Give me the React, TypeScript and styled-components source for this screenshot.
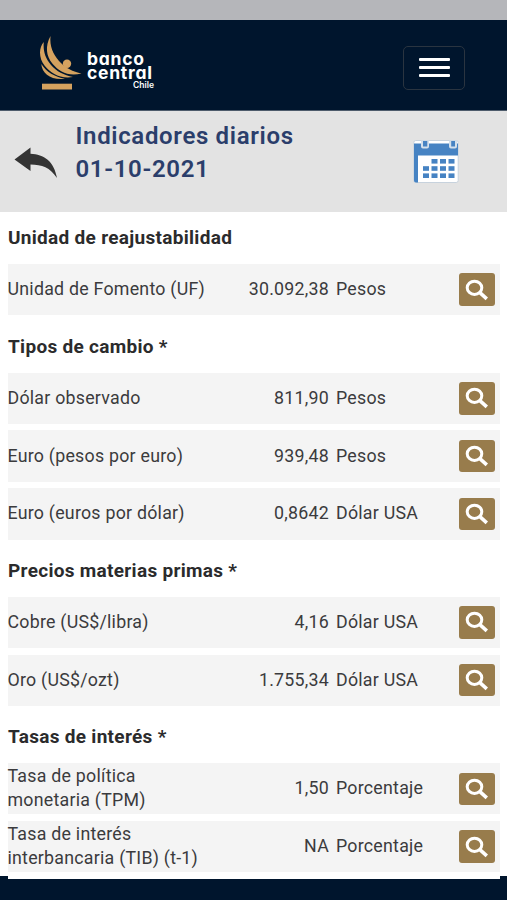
import React from 'react';
import styled, { createGlobalStyle } from 'styled-components';

const GlobalStyle = createGlobalStyle`
  * { box-sizing: border-box; }
  body { margin: 0; background: #fff; font-family: Roboto, sans-serif; color: #3b3b3d; }
  button { padding: 0; border: 0; background: none; font: inherit; }
  svg { display: block; }
`;

const Screen = styled.div`
  width: 507px;
  height: 900px;
  overflow: hidden;
  display: flex;
  flex-direction: column;
  background: #fff;
`;

const StatusBar = styled.div`
  flex: 0 0 20px;
  background: #b5b6ba;
`;

const Header = styled.header`
  flex: 0 0 91px;
  display: flex;
  align-items: flex-start;
  justify-content: space-between;
  padding: 15px 42px 0 39px;
  background: #00152d;
  border-bottom: 1px solid #4d5b6b;
`;

const Brand = styled.div`
  display: flex;
`;

const BrandName = styled.div`
  width: 71px;
  margin: 17px 0 0 5px;
  color: #fff;
  font-family: Inter, sans-serif;
  font-feature-settings: 'cv11';
`;

const BrandLine = styled.div`
  height: 13.7px;
  white-space: nowrap;
  font-size: 17.5px;
  line-height: 14px;
  font-weight: 700;
  letter-spacing: 0.75px;
`;

const Country = styled.div`
  padding: 1px 4px 0 0;
  text-align: right;
  font-size: 8.5px;
  line-height: 10px;
  font-weight: 600;
`;

const MenuButton = styled.button`
  width: 62px;
  height: 44px;
  margin-top: 10.5px;
  display: flex;
  flex-direction: column;
  align-items: center;
  justify-content: center;
  gap: 5px;
  border: 1px solid #2a3440;
  border-radius: 5px;
`;

const MenuLine = styled.span`
  width: 31px;
  height: 2.8px;
  border-radius: 1px;
  background: #fff;
`;

const TitleBar = styled.div`
  flex: 0 0 101px;
  display: flex;
  background: #e3e3e3;
`;

const BackButton = styled.button`
  width: 75.5px;
  height: 70px;
  padding: 35px 0 0 14px;
`;

const Title = styled.h1`
  flex: 1;
  margin: 9px 0 0;
  color: #2b3e6b;
  font-size: 24px;
  line-height: 33px;
  font-weight: 600;
  letter-spacing: 0.66px;
`;

const CalendarButton = styled.button`
  width: 94px;
  height: 75px;
  padding-top: 27px;
`;

const Content = styled.main`
  flex: 0 0 664px;
  min-height: 0;
  padding: 0 7px 0 8px;
`;

const SectionTitle = styled.h2`
  height: 51px;
  margin: 0;
  padding-top: 1px;
  color: #2b2b2c;
  font-size: 19px;
  line-height: 50px;
  font-weight: 700;
  letter-spacing: 0.3px;
`;

const Rows = styled.div`
  display: grid;
  grid-auto-rows: 51.4px;
  gap: 6.4px;
  padding: 1px 0 5.2px;
`;

const Row = styled.div`
  display: grid;
  grid-template-columns: 205px 116px 123px 36px;
  align-items: center;
  background: #f4f4f4;
  font-size: 17.8px;
  line-height: 24px;
  letter-spacing: 0.24px;
`;

const Name = styled.span`
  margin-left: -0.5px;
  padding-bottom: 0.8px;
  white-space: pre-line;
`;

const Value = styled.span`
  padding-bottom: 0.8px;
  text-align: right;
`;

const Unit = styled.span`
  padding: 0 0 0.8px 7px;
`;

const SearchButton = styled.button`
  width: 35.5px;
  height: 32.5px;
  margin-left: 7px;
  display: flex;
  align-items: center;
  justify-content: center;
  border-radius: 3px;
  background: #987c4c;
`;

const Footer = styled.footer`
  flex: 1;
  padding: 0 7px 0 8px;
  background: #00152d;
`;

const SheetEdge = styled.div`
  height: 2.7px;
  background: #fff;
`;

const LogoMark = () => (
  <svg width="43" height="56" viewBox="0 0 43 56" fill="#d5a25f">
    <path d="M11.5 1C6 11 7 21 13.5 28.8C20.5 37.2 29 41.5 42.5 38.6C34 36.5 26.5 33.5 20 26C14 19 10.5 11 11.5 1Z" />
    <path d="M4.8 7C-0.5 13 -0.2 23.5 5.5 30.5C12 38.5 21 44 34 42C25 40 17.5 36.5 12 30C5.8 22.5 4 15 4.8 7Z" />
    <path d="M2.3 29C3 38.5 12 45.5 26 43.8C15.5 41.8 7.5 37 2.3 29Z" />
    <circle cx="28" cy="28.7" r="4.2" />
    <rect x="3" y="48.7" width="30" height="5.8" />
  </svg>
);

const BackArrow = () => (
  <svg width="44" height="34" viewBox="0 0 44 34" fill="#343434">
    <path d="M0.5 12.5L16.5 0.5V6.7C30 7.5 40 14 43 31C36 20.5 28 17.5 16.5 17.5V24Z" />
  </svg>
);

const CalendarIcon = () => {
  const days = [
    [1, 0], [2, 0], [3, 0],
    [0, 1], [1, 1], [2, 1], [3, 1],
    [0, 2], [1, 2], [2, 2], [3, 2],
  ];
  return (
    <svg width="46" height="46" viewBox="0 0 46 46">
      <rect x="0.8" y="1.5" width="44.4" height="42" rx="2" fill="#fff" stroke="#c7d2dd" />
      <path d="M1 4.5H45V16.5H5V43.5H3Q1 43.5 1 41.5Z" fill="#4683c3" />
      <path d="M8 1.5H16V7.5Q16 9.5 14 9.5H10Q8 9.5 8 7.5ZM36 1.5H44V7.5Q44 9.5 42 9.5H38Q36 9.5 36 7.5Z" fill="#d4e0eb" />
      <path d="M10 2H14.3V7.5H10ZM38.2 2H42V7.5H38.2Z" fill="#4683c3" />
      {days.map(([c, r]) => (
        <rect key={`${c}-${r}`} x={10 + c * 8.5} y={20 + r * 7.2} width="6" height="4.6" fill="#4683c3" />
      ))}
    </svg>
  );
};

const SearchIcon = () => (
  <svg width="24" height="22" viewBox="0 0 24 22" fill="none" stroke="#fff">
    <ellipse cx="9.5" cy="8.8" rx="7.3" ry="6.6" strokeWidth="3" />
    <path d="M14.6 13.4L21.8 19.8" strokeWidth="3.6" />
  </svg>
);

type Indicator = { name: string; value: string; unit: string };

const sections: { title: string; rows: Indicator[] }[] = [
  {
    title: 'Unidad de reajustabilidad',
    rows: [{ name: 'Unidad de Fomento (UF)', value: '30.092,38', unit: 'Pesos' }],
  },
  {
    title: 'Tipos de cambio *',
    rows: [
      { name: 'Dólar observado', value: '811,90', unit: 'Pesos' },
      { name: 'Euro (pesos por euro)', value: '939,48', unit: 'Pesos' },
      { name: 'Euro (euros por dólar)', value: '0,8642', unit: 'Dólar USA' },
    ],
  },
  {
    title: 'Precios materias primas *',
    rows: [
      { name: 'Cobre (US$/libra)', value: '4,16', unit: 'Dólar USA' },
      { name: 'Oro (US$/ozt)', value: '1.755,34', unit: 'Dólar USA' },
    ],
  },
  {
    title: 'Tasas de interés *',
    rows: [
      { name: 'Tasa de política\nmonetaria (TPM)', value: '1,50', unit: 'Porcentaje' },
      { name: 'Tasa de interés\ninterbancaria (TIB) (t-1)', value: 'NA', unit: 'Porcentaje' },
    ],
  },
];

export default function App() {
  return (
    <>
      <GlobalStyle />
      <Screen>
        <StatusBar />
        <Header>
          <Brand>
            <LogoMark />
            <BrandName>
              <BrandLine>banco</BrandLine>
              <BrandLine>central</BrandLine>
              <Country>Chile</Country>
            </BrandName>
          </Brand>
          <MenuButton aria-label="Menú">
            <MenuLine />
            <MenuLine />
            <MenuLine />
          </MenuButton>
        </Header>
        <TitleBar>
          <BackButton aria-label="Volver">
            <BackArrow />
          </BackButton>
          <Title>
            Indicadores diarios
            <br />
            01-10-2021
          </Title>
          <CalendarButton aria-label="Calendario">
            <CalendarIcon />
          </CalendarButton>
        </TitleBar>
        <Content>
          {sections.map((section) => (
            <section key={section.title}>
              <SectionTitle>{section.title}</SectionTitle>
              <Rows>
                {section.rows.map((row) => (
                  <Row key={row.name}>
                    <Name>{row.name}</Name>
                    <Value>{row.value}</Value>
                    <Unit>{row.unit}</Unit>
                    <SearchButton aria-label="Buscar">
                      <SearchIcon />
                    </SearchButton>
                  </Row>
                ))}
              </Rows>
            </section>
          ))}
        </Content>
        <Footer>
          <SheetEdge />
        </Footer>
      </Screen>
    </>
  );
}
